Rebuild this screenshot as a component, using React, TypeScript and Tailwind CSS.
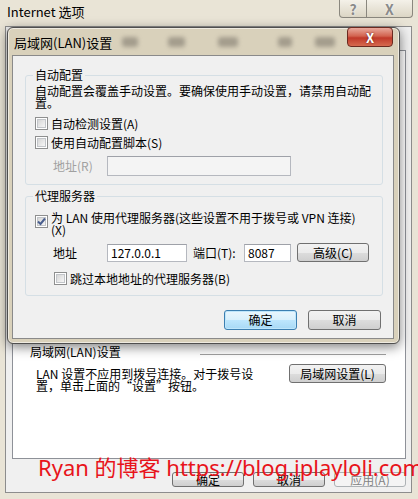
import React from "react";

const Check = ({ checked }: { checked?: boolean }) => (
  <span className="relative flex h-[13px] w-[13px] shrink-0 items-center justify-center border border-[#8e8f8f] bg-white">
    <span className="h-[9px] w-[9px] border border-[#c2c5c9] bg-[linear-gradient(135deg,#d6d6d6,#f6f6f6)]" />
    {checked && (
      <svg className="absolute left-[0px] top-[0px]" width="11" height="11" viewBox="0 0 11 11">
        <path d="M2 5.5 L4.5 8 L9 2.5" fill="none" stroke="#4a5f8f" strokeWidth="2" />
      </svg>
    )}
  </span>
);

const Btn = ({
  children,
  className,
  primary,
  disabled,
}: {
  children: React.ReactNode;
  className: string;
  primary?: boolean;
  disabled?: boolean;
}) => {
  let look =
    "border-[#707070] bg-[linear-gradient(#f2f2f2,#ebebeb_50%,#dddddd_50%,#cfcfcf)] text-black";
  if (primary)
    look =
      "border-[#3c7fb1] bg-[linear-gradient(#eaf6fd,#d9f0fc_50%,#bee6fd_50%,#a7d9f5)] text-black shadow-[inset_0_0_0_1px_#bfe6fb]";
  if (disabled) look = "border-[#adb2b5] bg-[#f4f4f4] text-[#838383]";
  return (
    <div
      className={`flex shrink-0 items-center justify-center rounded-[3px] border text-[12px] leading-[12px] ${look} ${className}`}
    >
      {children}
    </div>
  );
};

const Input = ({ className, value, disabled }: { className: string; value?: string; disabled?: boolean }) => (
  <div
    className={`flex shrink-0 items-center border border-[#b5b8bf] border-t-[#9ea1a8] pl-[3px] text-[12px] leading-[12px] ${
      disabled ? "bg-[#f4f4f4]" : "bg-white"
    } ${className}`}
  >
    {value}
  </div>
);

const Blob = ({ className }: { className: string }) => (
  <span className={`mt-[9px] h-[10px] rounded-[3px] bg-[#6f6a60]/50 blur-[2px] ${className}`} />
);

export default function App() {
  return (
    <div className="relative flex h-[499px] w-[418px] flex-col overflow-hidden bg-[#e9e4d6] font-['Noto_Sans_CJK_SC',sans-serif] text-[12px] leading-[12px] text-black">
      {/* outer window title */}
      <div className="flex h-[26px] shrink-0 items-start">
        <span className="ml-[7px] mt-[5px] text-[13px] leading-[13px]">Internet 选项</span>
        <div className="ml-auto mr-[5px] flex h-[18px]">
          <div className="flex w-[28px] items-center justify-center rounded-bl-[4px] border border-t-0 border-[#8a877e] bg-[linear-gradient(#f4f1e9,#dcd6c5)] text-[14px] font-bold text-[#8a8a8a] [text-shadow:0_0_2px_#fff]">
            ?
          </div>
          <div className="flex w-[46px] items-center justify-center rounded-br-[4px] border border-l-0 border-t-0 border-[#8a877e] bg-[linear-gradient(#f4f1e9,#dcd6c5)] text-[14px] font-bold text-[#8a8a8a] [text-shadow:0_0_2px_#fff]">
            X
          </div>
        </div>
      </div>

      {/* outer window body */}
      <div className="mb-[6px] ml-[5px] mr-[6px] flex flex-1 flex-col border border-[#8d8d8d] bg-[#f0f0f0]">
        <div className="ml-[6px] mr-[5px] mt-[23px] flex h-[409px] flex-col border border-[#8e9198] bg-white pl-[17px] pr-[19px] pt-[295px]">
          <div className="flex items-start">
            <span>局域网(LAN)设置</span>
            <span className="ml-auto mt-[8px] h-[2px] w-[186px] border-t border-[#a0a0a0] bg-white" />
          </div>
          <div className="mt-[6px] flex items-start">
            <div className="ml-[6px] mt-[4px] whitespace-nowrap">
              LAN 设置不应用到拨号连接。对于拨号设
              <br />
              置，单击上面的“设置”按钮。
            </div>
            <Btn className="ml-auto h-[19px] w-[97px]">局域网设置(L)</Btn>
          </div>
        </div>
        <div className="mt-[13px] flex justify-end gap-[9px] pr-[5px]">
          <Btn className="h-[15px] w-[72px]">确定</Btn>
          <Btn className="h-[15px] w-[72px]">取消</Btn>
          <Btn className="h-[15px] w-[72px]" disabled>
            应用(A)
          </Btn>
        </div>
      </div>

      {/* LAN settings dialog */}
      <div className="absolute left-[7px] top-[27px] flex h-[317px] w-[393px] flex-col rounded-[6px] border border-[#4f4f4f] bg-[#d9d1bb] shadow-[inset_0_0_0_1px_rgba(255,255,255,0.55),0_3px_12px_rgba(0,0,0,0.5)]">
        <div className="flex h-[27px] shrink-0 items-start">
          <span className="ml-[6px] mt-[8px] text-[13px] leading-[13px]">局域网(LAN)设置</span>
          <Blob className="ml-[10px] w-[16px]" />
          <Blob className="ml-[30px] w-[17px]" />
          <Blob className="ml-[33px] w-[20px]" />
          <Blob className="ml-[40px] w-[14px]" />
          <Blob className="ml-[23px] w-[20px]" />
          <div className="ml-auto mr-[6px] mt-[-1px] flex h-[20px] w-[46px] items-center justify-center rounded-[4px] border border-[#6b2a20] bg-[linear-gradient(#e9a99c,#d2634f_45%,#c0392a_55%,#d66a4f)] text-[13px] font-bold leading-[13px] text-white [text-shadow:0_0_2px_#5a1a10]">
            X
          </div>
        </div>

        <div className="mb-[4px] ml-[4px] mr-[5px] flex flex-1 flex-col border border-[#8a8a8a] bg-[#f0f0f0]">
          <fieldset className="ml-[12px] mr-[10px] mt-[13px] rounded-[3px] border border-[#d5dfe5] px-[9px] pb-[8px] pt-[4px]">
            <legend className="ml-[-2px] px-[2px]">自动配置</legend>
            <div className="whitespace-nowrap">
              自动配置会覆盖手动设置。要确保使用手动设置，请禁用自动配
              <br />
              置。
            </div>
            <div className="mt-[8px] flex items-center gap-[3px]">
              <Check />
              <span>自动检测设置(A)</span>
            </div>
            <div className="mt-[6px] flex items-center gap-[3px]">
              <Check />
              <span>使用自动配置脚本(S)</span>
            </div>
            <div className="mt-[7px] flex items-center pl-[18px]">
              <span className="w-[54px] text-[#a0a0a0]">地址(R)</span>
              <Input className="h-[20px] w-[184px]" disabled />
            </div>
          </fieldset>

          <fieldset className="ml-[12px] mr-[10px] mt-[5px] rounded-[3px] border border-[#d5dfe5] px-[9px] pb-[10px] pt-[10px]">
            <legend className="ml-[-2px] px-[2px]">代理服务器</legend>
            <div className="flex items-start gap-[3px]">
              <span className="mt-[3px]">
                <Check checked />
              </span>
              <span className="whitespace-nowrap">
                为 LAN 使用代理服务器(这些设置不用于拨号或 VPN 连接)
                <br />
                (X)
              </span>
            </div>
            <div className="mt-[7px] flex items-center pl-[18px]">
              <span className="w-[54px]">地址</span>
              <Input className="h-[18px] w-[80px]" value="127.0.0.1" />
              <span className="ml-[6px] w-[51px]">端口(T):</span>
              <Input className="h-[18px] w-[47px]" value="8087" />
              <Btn className="ml-[6px] h-[19px] w-[72px]">高级(C)</Btn>
            </div>
            <div className="mt-[10px] flex items-center gap-[3px] pl-[19px]">
              <Check />
              <span>跳过本地地址的代理服务器(B)</span>
            </div>
          </fieldset>

          <div className="mr-[12px] mt-[14px] flex justify-end gap-[11px]">
            <Btn className="h-[20px] w-[73px]" primary>
              确定
            </Btn>
            <Btn className="h-[20px] w-[73px]">取消</Btn>
          </div>
        </div>
      </div>

      {/* watermark */}
      <div className="absolute left-[38px] top-[456px] whitespace-nowrap font-['Noto_Sans','Noto_Sans_CJK_SC',sans-serif] text-[22px] leading-[22px] text-[#e8141b]">
        Ryan 的博客 https://blog.iplayloli.com
      </div>
    </div>
  );
}
